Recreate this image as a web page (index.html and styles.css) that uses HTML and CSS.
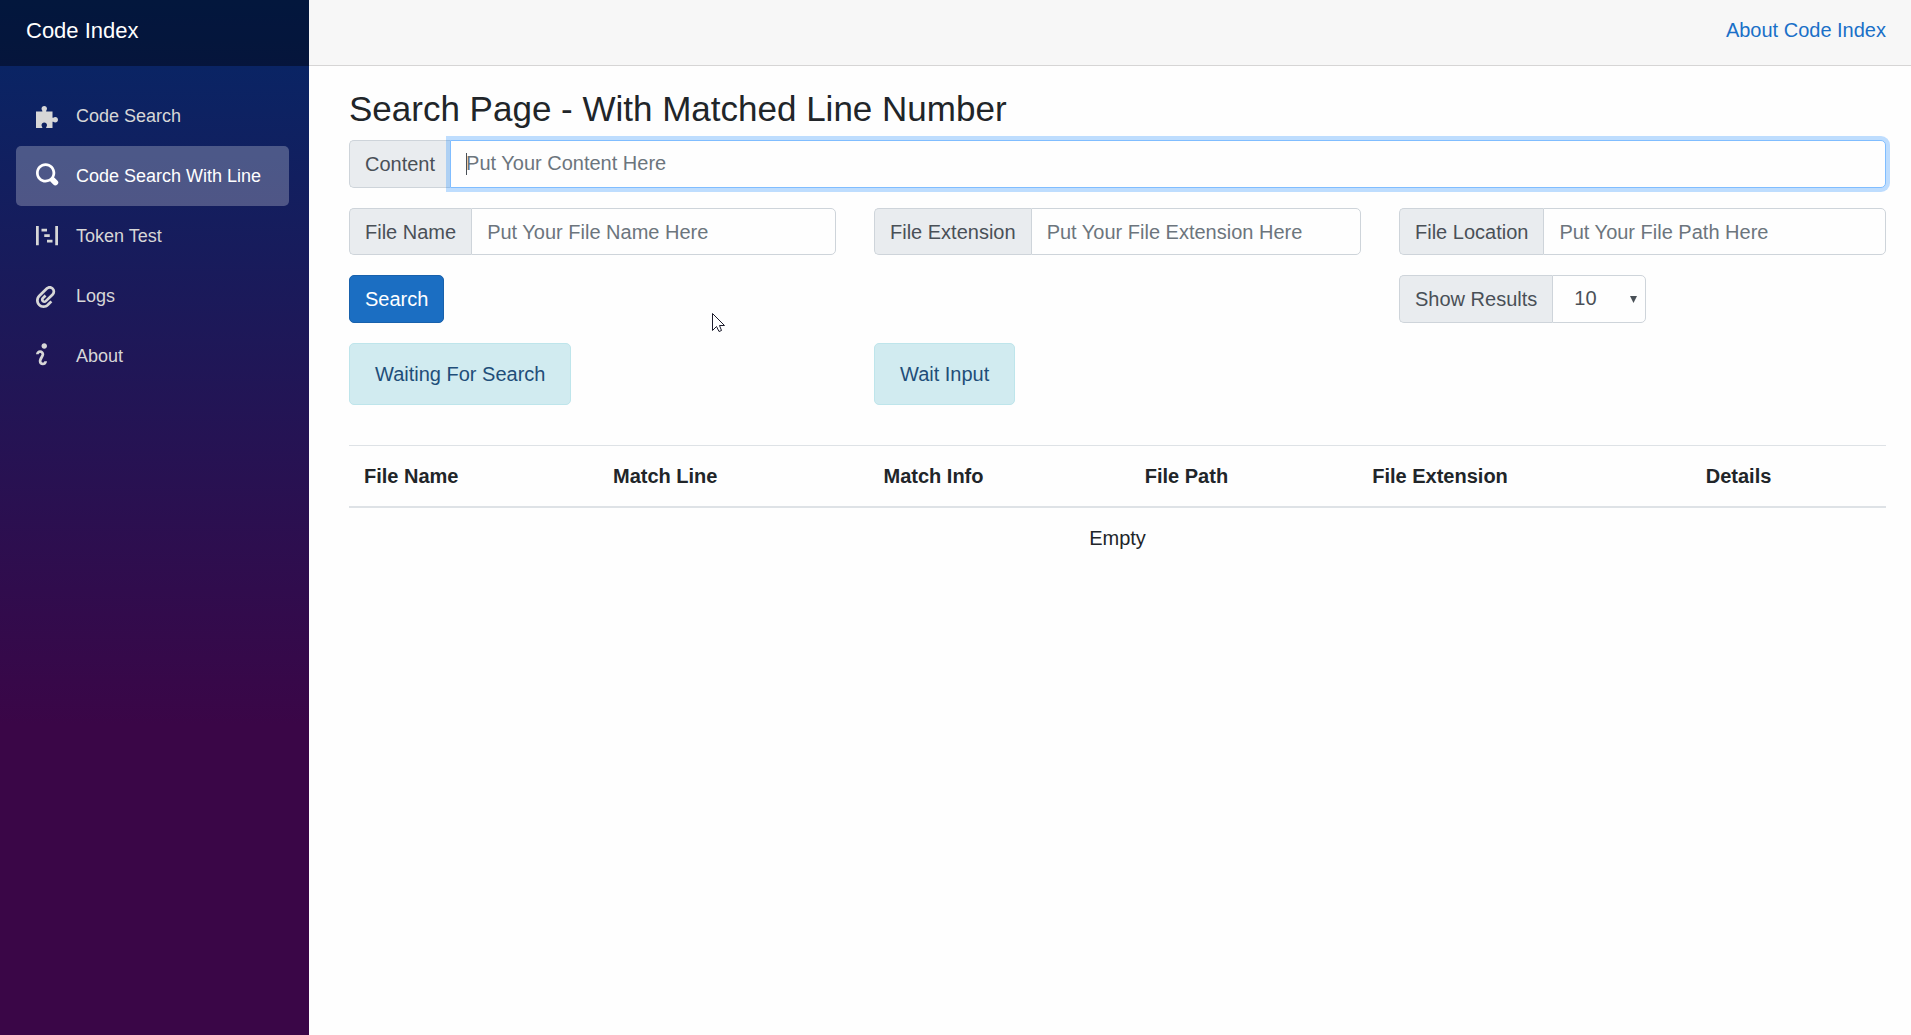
FILE: index.html
```html
<!DOCTYPE html>
<html lang="en">
<head>
  <meta charset="utf-8">
  <meta name="viewport" content="width=device-width, initial-scale=1">
  <title>Code Index</title>
  <link rel="stylesheet" href="styles.css">
</head>
<body>
  <div class="app">
    <aside class="sidebar">
      <div class="sidebar-top"><a class="brand" href="#">Code Index</a></div>
      <nav class="nav">
        <a class="nav-link" href="#">
          <svg class="nav-icon" viewBox="0 0 8 8" preserveAspectRatio="xMidYMax" aria-hidden="true"><path d="M3 0c-.28 0-.54.1-.72.28-.18.18-.28.44-.28.72 0 .28.18.48.28.72.03.06.03.16.03.28h-2.31v6h2.31c0-.12-.01-.22-.03-.28-.1-.24-.28-.44-.28-.72 0-.28.1-.54.28-.72.18-.18.44-.28.72-.28.28 0 .54.1.72.28.18.18.28.44.28.72 0 .28-.18.48-.28.72-.03.06-.03.16-.03.28h2.31v-2.31c.12 0 .22.01.28.03.24.1.44.28.72.28.28 0 .54-.1.72-.28.18-.18.28-.44.28-.72 0-.28-.1-.54-.28-.72-.18-.18-.44-.28-.72-.28-.28 0-.48.18-.72.28-.06.03-.16.03-.28.03v-2.31h-2.31c0-.12.01-.22.03-.28.1-.24.28-.44.28-.72 0-.28-.1-.54-.28-.72-.18-.18-.44-.28-.72-.28z"/></svg>
          Code Search
        </a>
        <a class="nav-link active" href="#" aria-current="page">
          <svg class="nav-icon" viewBox="0 1 8 8" preserveAspectRatio="xMidYMax" aria-hidden="true"><path d="M3.5 0c-1.93 0-3.5 1.57-3.5 3.5s1.57 3.5 3.5 3.5c.59 0 1.17-.14 1.66-.41a1 1 0 0 0 .13.13l1 1a1.02 1.02 0 1 0 1.44-1.44l-1-1a1 1 0 0 0-.16-.13c.27-.49.44-1.06.44-1.66 0-1.93-1.55-3.5-3.5-3.5zm0 1c1.39 0 2.5 1.11 2.5 2.5 0 .66-.24 1.27-.66 1.72-.01.01-.02.02-.03.03a1 1 0 0 0-.13.13c-.44.4-1.04.63-1.69.63-1.39 0-2.5-1.11-2.5-2.5s1.11-2.5 2.5-2.5z"/></svg>
          Code Search With Line
        </a>
        <a class="nav-link" href="#">
          <svg class="nav-icon" viewBox="0 0 8 8" preserveAspectRatio="xMidYMax" aria-hidden="true"><path d="M0 0v7h1v-7h-1zm7 0v7h1v-7h-1zm-5 1v1h2v-1h-2zm1 2v1h2v-1h-2zm1 2v1h2v-1h-2z"/></svg>
          Token Test
        </a>
        <a class="nav-link" href="#">
          <svg class="nav-icon" viewBox="0 0 8 8" preserveAspectRatio="xMidYMax" aria-hidden="true"><path d="M5 0c-.51 0-1.02.21-1.41.59l-2.78 2.72c-1.07 1.07-1.07 2.8 0 3.88 1.07 1.07 2.8 1.07 3.88 0l1.25-1.25-.69-.69-1.16 1.13-.09.13c-.69.69-1.81.69-2.5 0-.68-.68-.66-1.78 0-2.47l2.78-2.75c.39-.39 1.04-.39 1.44 0 .39.39.37 1.01 0 1.41l-2.5 2.47c-.1.1-.27.1-.38 0-.1-.1-.1-.27 0-.38l.06-.03.91-.94-.69-.69-.97.97c-.48.48-.48 1.27 0 1.75s1.27.49 1.75 0l2.5-2.44c.78-.78.78-2.04 0-2.81-.39-.39-.89-.59-1.41-.59z"/></svg>
          Logs
        </a>
        <a class="nav-link" href="#">
          <svg class="nav-icon" viewBox="0 1 8 8" preserveAspectRatio="xMidYMax" aria-hidden="true"><path d="M3 0c-.55 0-1 .45-1 1s.45 1 1 1 1-.45 1-1-.45-1-1-1zm-1.5 2.5c-.83 0-1.5.67-1.5 1.5h1c0-.28.22-.5.5-.5s.5.22.5.5-1 1.64-1 2.5c0 .86.67 1.5 1.5 1.5s1.5-.67 1.5-1.5h-1c0 .28-.22.5-.5.5s-.5-.22-.5-.5c0-.36 1-1.84 1-2.5 0-.81-.67-1.5-1.5-1.5z"/></svg>
          About
        </a>
      </nav>
    </aside>

    <div class="main">
      <header class="topbar"><a href="#">About Code Index</a></header>
      <main class="content">
        <h1 class="title">Search Page - With Matched Line Number</h1>
        <form class="search-form">
          <div class="input-group">
            <label class="addon" for="content">Content</label>
            <input class="control focused" id="content" type="text" placeholder="Put Your Content Here">
          </div>
          <div class="row">
            <div class="input-group compact">
              <label class="addon" for="file-name">File Name</label>
              <input class="control" id="file-name" type="text" placeholder="Put Your File Name Here">
            </div>
            <div class="input-group compact">
              <label class="addon" for="file-ext">File Extension</label>
              <input class="control" id="file-ext" type="text" placeholder="Put Your File Extension Here">
            </div>
            <div class="input-group compact">
              <label class="addon" for="file-path">File Location</label>
              <input class="control" id="file-path" type="text" placeholder="Put Your File Path Here">
            </div>
          </div>
          <div class="row">
            <button class="btn" type="button">Search</button>
            <div class="input-group results">
              <label class="addon" for="show">Show Results</label>
              <select class="control select" id="show">
                <option>10</option>
                <option>20</option>
                <option>50</option>
                <option>100</option>
              </select>
            </div>
          </div>
          <div class="row">
            <div class="alert" role="status">Waiting For Search</div>
            <div class="alert" role="status">Wait Input</div>
          </div>
        </form>
        <table class="table">
          <colgroup>
            <col class="col-name"><col class="col-line"><col class="col-info"><col class="col-path"><col class="col-ext"><col>
          </colgroup>
          <thead>
            <tr><th>File Name</th><th>Match Line</th><th>Match Info</th><th>File Path</th><th>File Extension</th><th>Details</th></tr>
          </thead>
          <tbody>
            <tr><td class="empty" colspan="6">Empty</td></tr>
          </tbody>
        </table>
      </main>
    </div>
  </div>
  <svg class="pointer" viewBox="0 0 13 20" aria-hidden="true"><path d="M.5 .5V17.500L4.500 13.500L7 18.500L9.500 17.500L7.500 12.500H12.500Z"/></svg>
</body>
</html>
```
FILE: styles.css
```css
*, *::before, *::after { box-sizing: border-box; }

body {
  margin: 0;
  background: #fefefe;
  color: #212529;
  font-family: "Liberation Sans", Arial, sans-serif;
  font-size: 20px;
  line-height: 30px;
}

a { color: #1a70c8; text-decoration: none; }

.app { display: flex; min-height: 100vh; }

/* Sidebar */
.sidebar {
  flex: 0 0 309px;
  background: linear-gradient(180deg, #052767 0%, #3a0647 70%);
}
.sidebar-top {
  display: flex;
  height: 66px;
  padding: 16px 26px;
  background: rgba(0, 0, 0, .4);
}
.brand { color: #fff; font-size: 22px; }
.nav { display: flex; flex-direction: column; padding: 20px 20px 0 16px; }
.nav-link {
  display: flex;
  align-items: center;
  gap: 18px;
  height: 60px;
  padding: 0 20px;
  border-radius: 5px;
  color: #d7d7d7;
  font-size: 18px;
}
.nav-link.active { background: rgba(255, 255, 255, .25); color: #fff; }
.nav-icon { width: 22px; height: 24px; overflow: visible; fill: currentColor; }

/* Main column */
.main { flex: 1; min-width: 0; }
.topbar {
  display: flex;
  justify-content: flex-end;
  height: 66px;
  padding: 15px 25px;
  border-bottom: 1px solid #d6d5d5;
  background: #f7f7f7;
}
.content { padding: 22px 25px 0 40px; }
.title { margin: 0 0 10px; font-size: 35px; font-weight: 400; line-height: 42px; }

.search-form { display: flex; flex-direction: column; gap: 20px; }
.row {
  display: grid;
  grid-template-columns: repeat(3, minmax(0, 1fr));
  gap: 38px;
  justify-items: start;
}

.input-group { display: flex; width: 100%; height: 48px; }
.input-group.compact { height: 47px; }
.addon {
  display: flex;
  align-items: center;
  padding: 0 15px;
  border: 1px solid #ced4da;
  border-right: 0;
  border-radius: 5px 0 0 5px;
  background: #e9ecef;
  color: #495057;
  white-space: nowrap;
}
.control {
  flex: 1;
  min-width: 0;
  padding: 0 15px 2px;
  border: 1px solid #ced4da;
  border-radius: 0 5px 5px 0;
  outline: 0;
  background: #fefefe;
  color: #495057;
  font: inherit;
}
.control::placeholder { color: #6c757d; opacity: 1; }
.compact .control { padding-bottom: 0; }
.control.focused {
  border-color: #80bdff;
  background: linear-gradient(#495057, #495057) 15px 12px / 1px 22px no-repeat #fefefe;
  box-shadow: 0 0 0 4px rgba(0, 123, 255, .25);
}

.results { grid-column: 3; width: auto; }
.select {
  flex: 0 0 94px;
  padding-left: 21px;
  appearance: none;
  background: url("data:image/svg+xml,%3Csvg xmlns='http://www.w3.org/2000/svg' viewBox='0 0 7 7'%3E%3Cpath fill='%23495057' d='M0 0h7L3.5 7z'/%3E%3C/svg%3E") right 8px center / 7px 7px no-repeat #fefefe;
}

.btn {
  height: 48px;
  padding: 0 15px;
  border: 1px solid #1861ac;
  border-radius: 5px;
  background: #1b6ec2;
  color: #fff;
  font: inherit;
}
.alert {
  padding: 15px 25px;
  border: 1px solid #bee5eb;
  border-radius: 5px;
  background: #d1ebf0;
  color: #1f4e79;
}

/* Results table */
.table { width: 100%; margin-top: 40px; border-collapse: collapse; table-layout: fixed; }
.table th {
  padding: 15px;
  border-top: 1px solid #dee2e6;
  border-bottom: 2px solid #dee2e6;
  text-align: left;
}
.table td { padding: 15px; }
.table .empty { text-align: center; }
.col-name { width: 16.2%; }
.col-line { width: 17.6%; }
.col-info { width: 17%; }
.col-path { width: 14.8%; }
.col-ext { width: 21.7%; }

/* Mouse pointer floating over the page */
.pointer {
  position: absolute;
  top: 313px;
  left: 712px;
  width: 13px;
  height: 20px;
  fill: #fff;
  stroke: #1c1c2c;
  pointer-events: none;
}
```
